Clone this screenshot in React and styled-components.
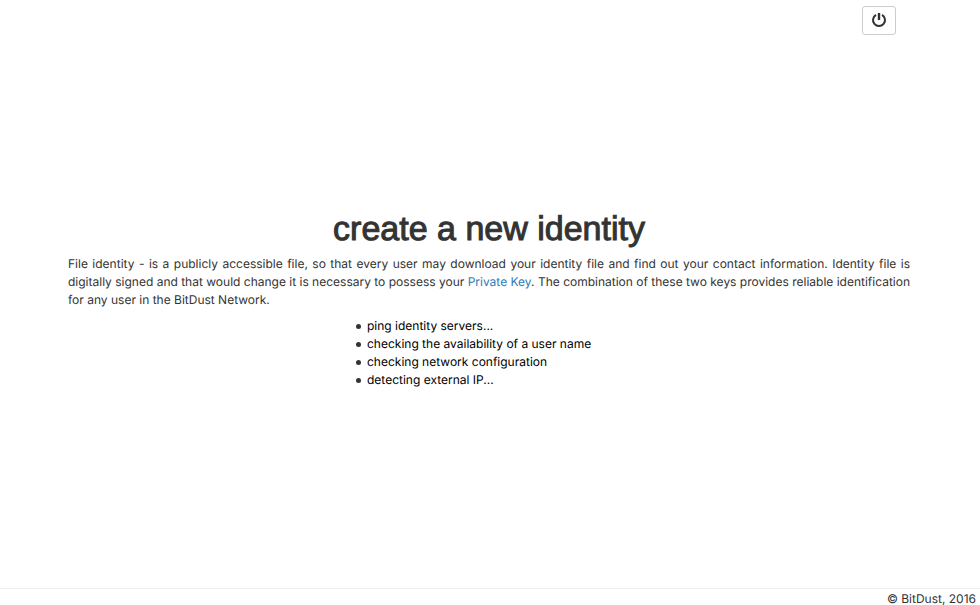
import React from "react";
import styled, { createGlobalStyle } from "styled-components";

const GlobalStyle = createGlobalStyle`
  * { box-sizing: border-box; }
  body {
    margin: 0;
    background: #fff;
    color: #333;
    font: 12px/18px Inter, "Liberation Sans", Arial, sans-serif;
    text-rendering: geometricPrecision;
  }
`;

const Page = styled.div`
  display: flex;
  flex-direction: column;
  min-height: 100vh;
`;

const TopBar = styled.header`
  display: flex;
  justify-content: flex-end;
  padding: 6px 84px 0;
`;

const PowerButton = styled.button`
  display: flex;
  justify-content: center;
  width: 34px;
  height: 29px;
  padding: 5px 0 0;
  border: 1px solid #ccc;
  border-radius: 3px;
  background: #fff;
  color: #333;
  cursor: pointer;
`;

const Content = styled.main`
  flex: 1;
  display: flex;
  flex-direction: column;
  justify-content: center;
  padding: 0 70px 23px 68px;
`;

const Title = styled.h1`
  margin: 0 0 8px;
  font-family: "Liberation Sans", Arial, sans-serif;
  font-size: 34px;
  font-weight: 500;
  line-height: 36px;
  text-align: center;
  -webkit-text-stroke: 1px #333;
`;

const Description = styled.p`
  margin: 0 0 8px;
  text-align: justify;
`;

const KeyLink = styled.a`
  color: #337ab7;
  text-decoration: none;
`;

const Steps = styled.ul`
  align-self: center;
  width: 266px;
  margin: 0;
  padding: 0;
  list-style: none;
`;

const Step = styled.li`
  display: flex;
  align-items: center;
  gap: 6px;
  color: #000;

  &::before {
    content: "";
    width: 5px;
    height: 5px;
    border-radius: 50%;
    background: #333;
  }
`;

const Footer = styled.footer`
  padding: 4px 4px 0;
  border-top: 1px solid #eee;
  line-height: 12px;
  text-align: right;
`;

const steps = [
  "ping identity servers...",
  "checking the availability of a user name",
  "checking network configuration",
  "detecting external IP...",
];

function PowerIcon() {
  return (
    <svg width="16" height="16" viewBox="0 0 16 16" fill="none" stroke="currentColor" aria-hidden="true">
      <path d="M5 2.9a6 6 0 1 0 6 0" strokeWidth="2" />
      <path d="M8 1v7" strokeWidth="2.4" />
    </svg>
  );
}

export default function App() {
  return (
    <Page>
      <GlobalStyle />
      <TopBar>
        <PowerButton type="button" aria-label="Power">
          <PowerIcon />
        </PowerButton>
      </TopBar>
      <Content>
        <Title>create a new identity</Title>
        <Description>
          File identity - is a publicly accessible file, so that every user may download your
          identity file and find out your contact information. Identity file is digitally signed
          and that would change it is necessary to possess your{" "}
          <KeyLink href="#private-key">Private Key</KeyLink>. The combination of these two keys
          provides reliable identification for any user in the BitDust Network.
        </Description>
        <Steps>
          {steps.map((step) => (
            <Step key={step}>{step}</Step>
          ))}
        </Steps>
      </Content>
      <Footer>© BitDust, 2016</Footer>
    </Page>
  );
}
